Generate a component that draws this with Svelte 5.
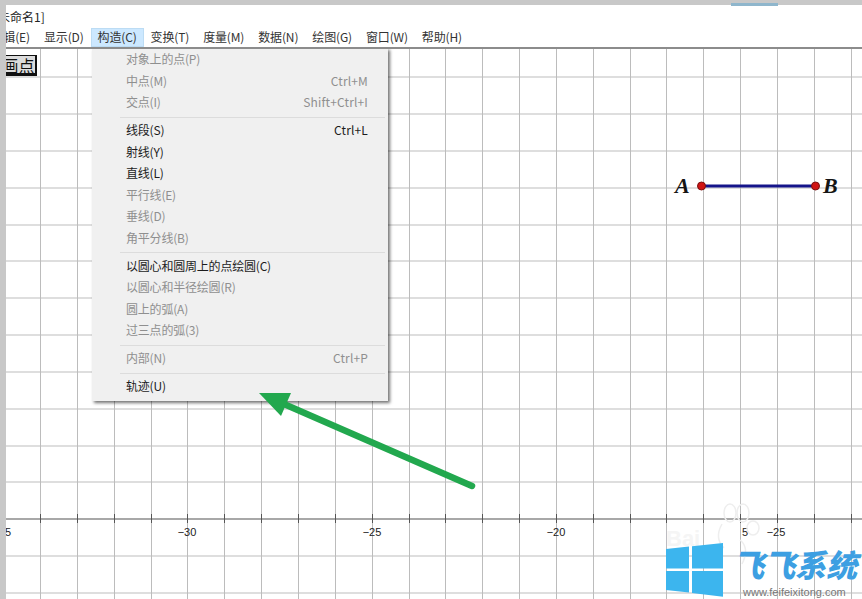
<script>
  const menuBar = [
    { label: "编辑(E)", clip: true },
    { label: "显示(D)" },
    { label: "构造(C)", active: true },
    { label: "变换(T)" },
    { label: "度量(M)" },
    { label: "数据(N)" },
    { label: "绘图(G)" },
    { label: "窗口(W)" },
    { label: "帮助(H)" },
  ];

  // null = separator
  const menuItems = [
    { label: "对象上的点(P)", off: true },
    { label: "中点(M)", key: "Ctrl+M", off: true },
    { label: "交点(I)", key: "Shift+Ctrl+I", off: true },
    null,
    { label: "线段(S)", key: "Ctrl+L" },
    { label: "射线(Y)" },
    { label: "直线(L)" },
    { label: "平行线(E)", off: true },
    { label: "垂线(D)", off: true },
    { label: "角平分线(B)", off: true },
    null,
    { label: "以圆心和圆周上的点绘圆(C)" },
    { label: "以圆心和半径绘圆(R)", off: true },
    { label: "圆上的弧(A)", off: true },
    { label: "过三点的弧(3)", off: true },
    null,
    { label: "内部(N)", key: "Ctrl+P", off: true },
    null,
    { label: "轨迹(U)" },
  ];

  const STEP = 36.85;
  const vLines = Array.from({ length: 23 }, (_, i) => Math.round(40 + i * STEP) + 0.5);
  const hLines = [77, 114, 151, 188, 225, 261, 298, 335, 372, 409, 446, 482, 556, 593];
  const axisLabels = [
    { x: 8, t: "5" },
    { x: 187, t: "−30" },
    { x: 372, t: "−25" },
    { x: 556, t: "−20" },
    { x: 745, t: "5" },
    { x: 776, t: "−25" },
  ];
</script>

<div class="app">
  <div class="top-band">
    <span class="top-tab"></span>
  </div>
  <div class="window">
    <div class="title"><span class="title-text">未命名1]</span></div>
    <nav class="menubar">
      {#each menuBar as m}
        <span class="bar-item" class:active={m.active} class:clip={m.clip}>{m.label}</span>
      {/each}
    </nav>

    <div class="canvas">
      <svg class="sheet" viewBox="6 49 856 550" width="856" height="550">
        {#each hLines as y}
          <line class="h" x1="6" x2="862" y1={y} y2={y} />
        {/each}
        {#each vLines as x}
          <line class="v" x1={x} x2={x} y1="49" y2="599" />
        {/each}
        <line class="axis" x1="6" x2="862" y1="519" y2="519" />
        {#each vLines as x}
          <line class="tick" x1={x} x2={x} y1="514" y2="523" />
        {/each}
        {#each axisLabels as a}
          <text class="num" x={a.x} y="536" text-anchor="middle">{a.t}</text>
        {/each}

        <!-- segment AB -->
        <line class="seg" x1="702" y1="186" x2="815" y2="186" />
        <circle class="pt" cx="701.5" cy="186" r="4" />
        <circle class="pt" cx="815.5" cy="186" r="4" />
        <text class="pt-name" x="675" y="193">A</text>
        <text class="pt-name" x="823" y="193">B</text>

        <!-- faint watermark behind the logo -->
        <g class="ghost">
          <ellipse cx="730" cy="513" rx="6" ry="9" />
          <ellipse cx="743" cy="513" rx="6" ry="9" />
          <ellipse cx="753" cy="528" rx="6" ry="7" />
          <path d="M722 524q-8 14 2 24M740 540q10 8 2 24" />
        </g>
        <text class="ghost-text" x="666" y="546">Bai</text>

        <!-- site logo -->
        <g class="win">
          <polygon points="666,549 689,546.6 689,568.5 666,568.5" />
          <polygon points="692,546.3 723,543 723,568.5 692,568.5" />
          <polygon points="666,571 689,571 689,592.5 666,590" />
          <polygon points="692,571 723,571 723,596.7 692,593" />
        </g>
      </svg>

      <button class="draw-btn">画点</button>

      <div class="site">
        <span class="site-name">飞飞系统</span>
        <span class="site-url">www.feifeixitong.com</span>
      </div>

      <div class="menu">
        {#each menuItems as item}
          {#if item}
            <div class="row" class:off={item.off}>
              <span class="label">{item.label}</span>
              {#if item.key}<span class="key">{item.key}</span>{/if}
            </div>
          {:else}
            <div class="sep"></div>
          {/if}
        {/each}
      </div>

      <!-- green arrow drawn over the menu -->
      <svg class="overlay" viewBox="6 49 856 550" width="856" height="550">
        <line class="arrow-line" x1="472" y1="486" x2="277" y2="401" />
        <polygon class="arrow-head" points="259,393 291,393 281,416" />
      </svg>
    </div>
  </div>
</div>

<style>
  :global(body) {
    margin: 0;
  }
  .app {
    width: 862px;
    height: 599px;
    overflow: hidden;
    display: flex;
    flex-direction: column;
    background: #c8c8c8;
    font-family: "Noto Sans CJK SC", "Liberation Sans", sans-serif;
    font-size: 12px;
    color: #222;
  }
  .top-band {
    height: 5px;
    flex: none;
    position: relative;
  }
  .top-tab {
    position: absolute;
    left: 731px;
    top: 3px;
    width: 47px;
    height: 3px;
    background: #8fb6cc;
  }
  .window {
    flex: 1;
    margin-left: 6px;
    min-height: 0;
    display: flex;
    flex-direction: column;
    background: #fff;
  }
  .title {
    height: 23px;
    line-height: 24px;
    overflow: hidden;
    flex: none;
  }
  .title-text {
    display: block;
    margin-left: -8px;
  }
  .menubar {
    height: 19px;
    flex: none;
    display: flex;
    align-items: stretch;
    overflow: hidden;
    border-bottom: 2px solid #8c8c8c;
    color: #333;
    line-height: 18px;
    letter-spacing: -0.15px;
  }
  .bar-item {
    padding: 0 7px;
    white-space: nowrap;
  }
  .bar-item.clip {
    margin-left: -14.5px;
    padding: 0 7px 0 0;
  }
  .bar-item.active {
    background: #cce8ff;
    box-shadow: inset 0 0 0 1px #bcdcf4;
  }
  .canvas {
    flex: 1;
    position: relative;
    min-height: 0;
    overflow: hidden;
  }
  .sheet {
    display: block;
  }
  .overlay {
    position: absolute;
    left: 0;
    top: 0;
    pointer-events: none;
  }
  .h {
    stroke: #dedede;
    stroke-width: 2;
  }
  .v {
    stroke: #bcbcbc;
    stroke-width: 1;
  }
  .axis {
    stroke: #a8a8a8;
    stroke-width: 2;
  }
  .tick {
    stroke: #555;
    stroke-width: 1;
  }
  .num {
    font-family: "Liberation Sans", sans-serif;
    font-size: 11px;
    fill: #222;
  }
  .seg {
    stroke: #14148a;
    stroke-width: 3;
  }
  .pt {
    fill: #d01414;
    stroke: #7a1010;
    stroke-width: 1;
  }
  .pt-name {
    font-family: "Liberation Serif", serif;
    font-size: 22px;
    font-weight: bold;
    font-style: italic;
    fill: #151515;
  }
  .ghost {
    fill: none;
    stroke: #eeeeee;
    stroke-width: 1.5;
  }
  .ghost-text {
    font-family: "Liberation Sans", sans-serif;
    font-size: 22px;
    font-weight: bold;
    fill: #f5f5f5;
  }
  .arrow-line {
    stroke: #22a84e;
    stroke-width: 6.5;
    stroke-linecap: round;
  }
  .arrow-head {
    fill: #22a84e;
  }
  .win polygon {
    fill: #3cb5ee;
  }
  .draw-btn {
    position: absolute;
    left: -6px;
    top: 6px;
    width: 37px;
    height: 21px;
    padding: 0 0 0 1px;
    background: #dcdcdc;
    border: 1px solid #111;
    border-right-width: 2px;
    border-bottom-width: 3px;
    box-sizing: border-box;
    font: 16px/16px "Noto Sans CJK SC", sans-serif;
    color: #111;
  }
  .site {
    position: absolute;
    left: 727px;
    top: 497px;
    display: flex;
    flex-direction: column;
  }
  .site-name {
    font-size: 31px;
    line-height: 36px;
    font-weight: 900;
    font-style: italic;
    color: #3d9fe2;
    white-space: nowrap;
  }
  .site-url {
    font-family: "Liberation Sans", sans-serif;
    font-size: 11px;
    line-height: 14px;
    margin-top: 3px;
    margin-left: 10px;
    color: #777;
  }
  .menu {
    position: absolute;
    left: 86px;
    top: -1px;
    width: 296px;
    height: 353px;
    box-sizing: border-box;
    background: #f0f0f0;
    border-top: 1px solid #ddd;
    box-shadow: 2px 2px 3px rgba(0, 0, 0, 0.55);
  }
  .row {
    height: 21.5px;
    line-height: 19px;
    padding: 0 20px 0 34px;
    display: flex;
    justify-content: space-between;
    color: #1c1c1c;
  }
  .row:last-child {
    margin-top: 1px;
  }
  .row.off {
    color: #8f8f8f;
  }
  .label {
    letter-spacing: -0.2px;
  }
  .key {
    letter-spacing: 0.15px;
  }
  .sep {
    height: 1px;
    margin: 3px 3px 2.5px 28px;
    background: #dcdcdc;
  }
</style>
